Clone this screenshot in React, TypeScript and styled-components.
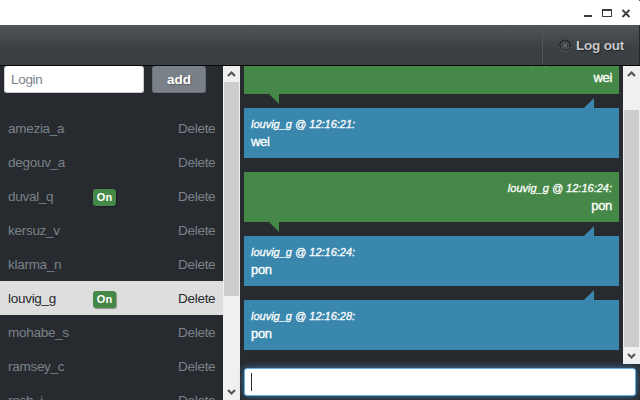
import React from "react";
import styled, { createGlobalStyle, css } from "styled-components";

const GlobalStyle = createGlobalStyle`
  * { box-sizing: border-box; }
  html, body { margin: 0; overflow: hidden; }
  body { font: 13.5px/18px "Liberation Sans", Arial, sans-serif; background: #272b30; }
`;

const Window = styled.div`
  width: 640px;
  height: 400px;
  display: flex;
  flex-direction: column;
  overflow: hidden;
  background: #272b30;
`;

const TitleBar = styled.div`
  height: 25px;
  flex: none;
  display: flex;
  justify-content: flex-end;
  background: #fff;
`;

const NavBar = styled.nav`
  height: 41px;
  flex: none;
  display: flex;
  justify-content: flex-end;
  background: linear-gradient(#515459, #3a3f44 62%, #3a3f44);
  border-bottom: 1px solid #050607;
`;

const LogoutButton = styled.button`
  width: 98px;
  display: flex;
  align-items: center;
  gap: 4px;
  padding: 2px 0 0 15px;
  border: 0;
  border-left: 1px solid #53575c;
  border-right: 1px solid #24272a;
  background: transparent;
  color: #c8c8c8;
  font: bold 13.5px/18px "Liberation Sans", Arial, sans-serif;
  letter-spacing: -0.2px;
  white-space: nowrap;
  text-shadow: 1px 1px 1px rgba(0, 0, 0, 0.5);
`;

const Body = styled.div`
  flex: 1;
  min-height: 0;
  display: flex;
`;

const Sidebar = styled.aside`
  width: 240px;
  flex: none;
  display: flex;
`;

const SidebarContent = styled.div`
  width: 223px;
  overflow: hidden;
`;

const AddForm = styled.div`
  display: flex;
  gap: 8px;
  padding-left: 4px;
  height: 45px;
`;

const LoginInput = styled.input`
  width: 140px;
  height: 27px;
  padding: 1px 6px 0;
  border: 1px solid #ccc;
  border-top: 0;
  border-radius: 3px;
  background: #fff;
  font: 13.5px/18px "Liberation Sans", Arial, sans-serif;
  letter-spacing: -0.3px;
  outline: 0;
  &::placeholder { color: #7a8288; opacity: 1; }
`;

const AddButton = styled.button`
  width: 54px;
  height: 27px;
  padding: 2px 0 0;
  border: 1px solid #6a7077;
  border-top: 0;
  border-radius: 3px;
  background: #7a8088;
  color: #fff;
  font: bold 13.5px/18px "Liberation Sans", Arial, sans-serif;
  text-shadow: 1px 1px 1px rgba(0, 0, 0, 0.3);
`;

const UserRow = styled.div<{ $active?: boolean }>`
  height: 34px;
  display: grid;
  grid-template-columns: 85px 1fr 37px;
  align-items: center;
  padding: 1px 8px 0;
  letter-spacing: -0.28px;
  white-space: nowrap;
  color: ${(p) => (p.$active ? "#272b30" : "#7a8288")};
  background: ${(p) => (p.$active ? "#dedede" : "transparent")};
`;

const Badge = styled.span`
  display: block;
  width: 23px;
  height: 17px;
  margin-top: 1px;
  border-radius: 3px;
  background: #468847;
  box-shadow: 1px 1px 1px rgba(0, 0, 0, 0.35);
  color: #fff;
  font-size: 11px;
  line-height: 17px;
  letter-spacing: 0;
  font-weight: bold;
  text-align: center;
`;

const Chat = styled.main`
  flex: 1;
  min-width: 0;
  display: flex;
  flex-direction: column;
`;

const ChatScroll = styled.div`
  height: 298px;
  display: flex;
`;

const Messages = styled.div`
  width: 383px;
  overflow: hidden;
  padding: 0 4px;
`;

const MessageList = styled.div`
  display: flex;
  flex-direction: column;
  gap: 14px;
  margin-top: -22px;
`;

const tailUp = css`
  right: 25px;
  bottom: 100%;
  clip-path: polygon(100% 0, 100% 100%, 0 100%);
`;

const tailDown = css`
  left: 25px;
  top: 100%;
  clip-path: polygon(0 0, 100% 0, 100% 100%);
`;

const Bubble = styled.div<{ $own?: boolean }>`
  position: relative;
  width: 375px;
  height: 50px;
  padding: 7px 7px 0;
  color: #fff;
  text-align: ${(p) => (p.$own ? "right" : "left")};
  background: ${(p) => (p.$own ? "#468847" : "#3a87ad")};
  &::after {
    content: "";
    position: absolute;
    width: 10px;
    height: 10px;
    background: inherit;
    ${(p) => (p.$own ? tailDown : tailUp)}
  }
`;

const Stamp = styled.div`
  font-size: 11px;
  line-height: 18px;
  font-style: italic;
  -webkit-text-stroke: 0.3px #fff;
`;

const MessageText = styled.div`
  font-size: 13px;
  line-height: 18px;
  letter-spacing: -0.3px;
  -webkit-text-stroke: 0.35px #fff;
`;

const Composer = styled.div`
  padding: 4px;
`;

const MessageBox = styled.div`
  height: 28px;
  display: flex;
  align-items: center;
  padding-left: 6px;
  border: 1px solid #66afe9;
  border-radius: 3px;
  background: #fff;
  box-shadow: 0 0 7px rgba(82, 168, 236, 0.6);
`;

const Caret = styled.span`
  width: 1px;
  height: 18px;
  background: #272b30;
`;

const Track = styled.div`
  width: 17px;
  flex: none;
  display: flex;
  flex-direction: column;
  justify-content: space-between;
  background: #f0f0f0;
`;

const Thumb = styled.div<{ $height: number; $offset: number }>`
  height: ${(p) => p.$height}px;
  margin: ${(p) => p.$offset}px 1px auto;
  background: #cdcdcd;
`;

const Arrow = ({ down = false }: { down?: boolean }) => (
  <svg width="17" height="16" viewBox="0 0 17 16">
    <path
      d={down ? "M5 6 L8.5 9.5 L12 6" : "M5 10 L8.5 6.5 L12 10"}
      fill="none"
      stroke="#555"
      strokeWidth="2.2"
    />
  </svg>
);

const ScrollBar = ({ height, offset }: { height: number; offset: number }) => (
  <Track>
    <Arrow />
    <Thumb $height={height} $offset={offset} />
    <Arrow down />
  </Track>
);

const users = [
  { name: "amezia_a" },
  { name: "degouv_a" },
  { name: "duval_q", online: true },
  { name: "kersuz_v" },
  { name: "klarma_n" },
  { name: "louvig_g", online: true, active: true },
  { name: "mohabe_s" },
  { name: "ramsey_c" },
  { name: "rosh_i" },
];

const messages = [
  { time: "12:16:21", text: "wei", own: true },
  { time: "12:16:21", text: "wei" },
  { time: "12:16:24", text: "pon", own: true },
  { time: "12:16:24", text: "pon" },
  { time: "12:16:28", text: "pon" },
];

export default function App() {
  return (
    <Window>
      <GlobalStyle />
      <TitleBar>
        <svg width="60" height="25" viewBox="580 0 60 25" shapeRendering="crispEdges">
          <path d="M584 15h8v2h-8zM602 9h10v8h-10zM603 11v5h8v-5z" fill="#3c3c3c" fillRule="evenodd" />
          <path d="M622.5 10l7 7M629.5 10l-7 7" stroke="#3c3c3c" strokeWidth="1.8" shapeRendering="auto" />
          <path d="M639 0h1v1h-1z" fill="#555" />
        </svg>
      </TitleBar>
      <NavBar>
        <LogoutButton>
          <svg width="14" height="14" viewBox="0 0 14 14">
            <circle cx="7" cy="6.5" r="6" fill="#2a2d30" />
            <path d="M1.2 8a6 6 0 0 0 11.6 0" fill="none" stroke="#666a6d" strokeWidth=".8" />
            <circle cx="7" cy="6.5" r="3.8" fill="#303437" stroke="#565a5d" strokeWidth="1" />
            <path d="M5 4.5l4 4M9 4.5l-4 4" stroke="#6b6f72" strokeWidth="1.3" />
          </svg>
          Log out
        </LogoutButton>
      </NavBar>
      <Body>
        <Sidebar>
          <SidebarContent>
            <AddForm>
              <LoginInput placeholder="Login" />
              <AddButton>add</AddButton>
            </AddForm>
            {users.map((u) => (
              <UserRow key={u.name} $active={u.active}>
                <span>{u.name}</span>
                <span>{u.online && <Badge>On</Badge>}</span>
                <span>Delete</span>
              </UserRow>
            ))}
          </SidebarContent>
          <ScrollBar height={214} offset={0} />
        </Sidebar>
        <Chat>
          <ChatScroll>
            <Messages>
              <MessageList>
                {messages.map((m, i) => (
                  <Bubble key={i} $own={m.own}>
                    <Stamp>louvig_g @ {m.time}:</Stamp>
                    <MessageText>{m.text}</MessageText>
                  </Bubble>
                ))}
              </MessageList>
            </Messages>
            <ScrollBar height={237} offset={28} />
          </ChatScroll>
          <Composer>
            <MessageBox>
              <Caret />
            </MessageBox>
          </Composer>
        </Chat>
      </Body>
    </Window>
  );
}
